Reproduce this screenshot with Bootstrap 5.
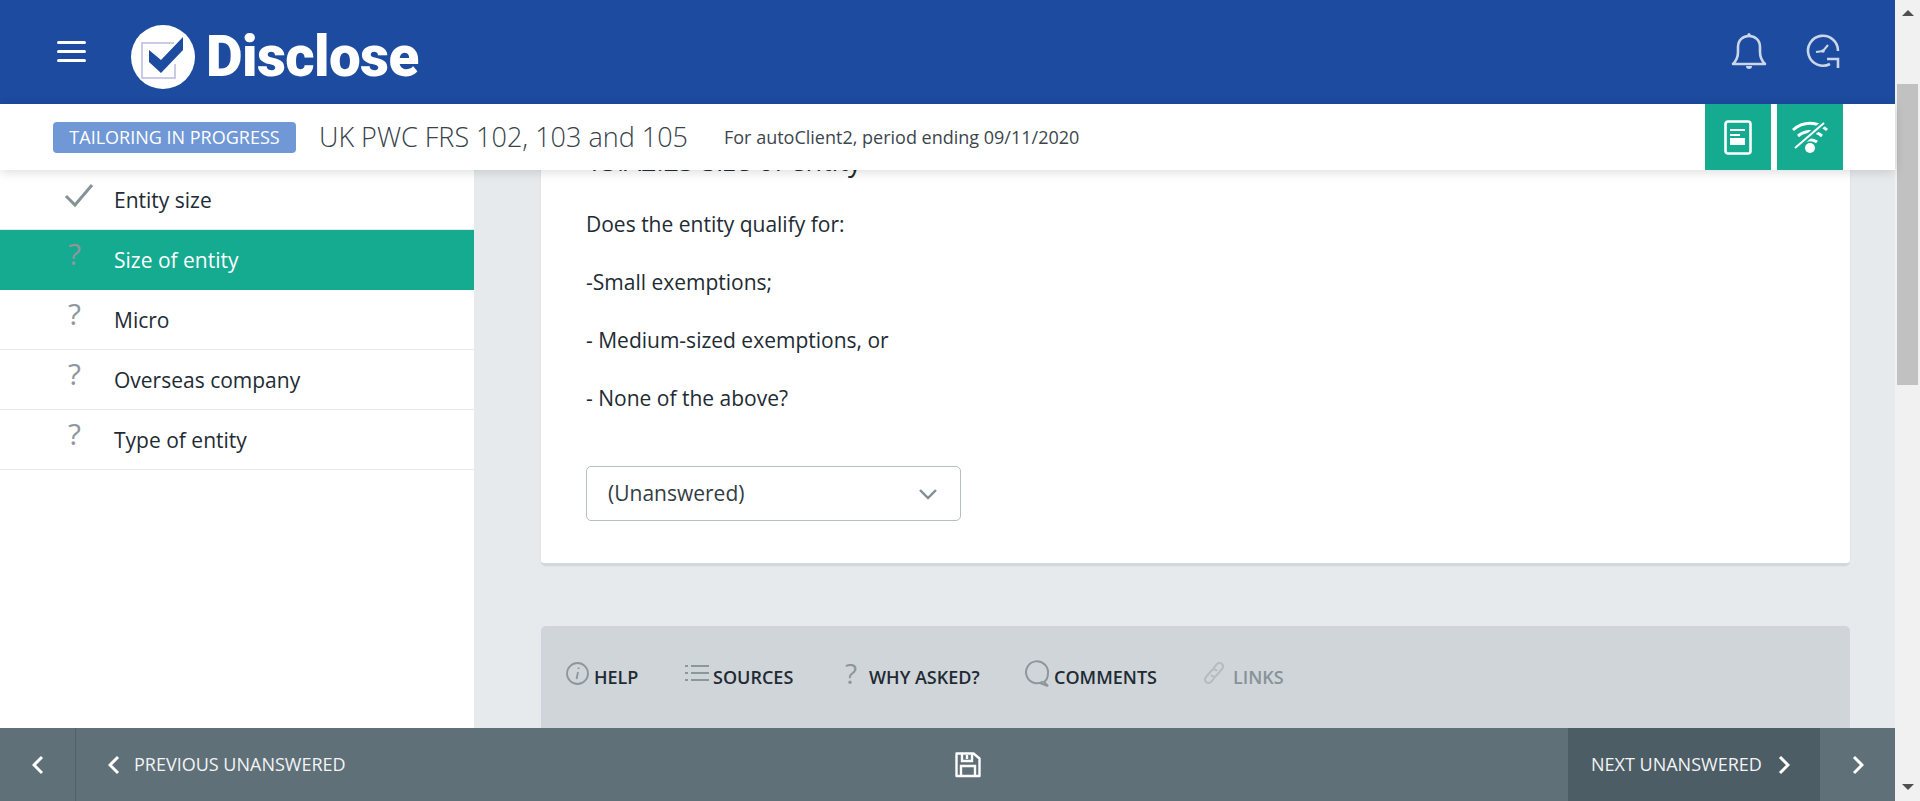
<!DOCTYPE html>
<html lang="en"><head><meta charset="utf-8"><title>Disclose</title>
<link href="https://cdn.jsdelivr.net/npm/bootstrap@5.3.0/dist/css/bootstrap.min.css" rel="stylesheet">
<style>
html,body{height:100%;overflow:hidden}
body{font-family:"Open Sans",sans-serif;color:#222b33;background:#fff}
.shell{height:801px}
.app-col{min-width:0}
.top-bar{height:104px;background:#1c4b9f;padding-left:57px;padding-right:54px;flex:none}
.burger{width:29px;height:21px;margin-right:44px;margin-top:-2px;display:flex;flex-direction:column;justify-content:space-between}
.burger i{display:block;height:3px;border-radius:2px;background:#fff}
.logo-mark{margin-top:10px}
.logo-word{font-family:Roboto,sans-serif;font-weight:900;font-size:56.5px;line-height:1;color:#fff;letter-spacing:-.6px;margin-left:10px;margin-top:11px}
.bell-ic{margin-top:-2px}
.clock-ic{margin-left:14px;margin-top:-2px}
.sub-bar{height:66px;flex:none;background:#fff;padding-left:53px;padding-right:52px;position:relative;z-index:3;box-shadow:0 2px 10px rgba(0,0,0,.14)}
.state-tag{background:#7098d6;color:#fff;border-radius:4px;font-size:18px;height:31px;width:243px;line-height:31px;text-align:center;margin-right:23px;white-space:nowrap}
.doc-title{font-weight:300;font-size:27px;color:#37424a;margin-right:36px;white-space:nowrap}
.doc-for{font-size:18px;color:#3c464d;white-space:nowrap}
.teal-btn{width:66px;height:66px;background:#14ab91;margin-left:6px;display:flex;align-items:center;justify-content:center}
.middle{flex:1 1 0;min-height:0;overflow:hidden;background:#e6eaed}
.side-nav{width:474px;flex:none;background:#fff}
.side-row{height:60px;border-bottom:1px solid #e6e9eb;display:flex;align-items:center;padding-left:64px;font-size:21px;color:#222b33}
.side-label{margin-top:2px}
.side-row.on{background:#14ab91;color:#fff;border-bottom-color:#14ab91}
.side-ic{width:50px;flex:none;height:40px;display:flex;margin-top:-8px;font-weight:400;font-size:30px;line-height:36px;color:#8d979c;padding-left:4px}
.side-ic.tick{padding-left:0;margin-left:0;width:50px;margin-top:-10px}
.main-col{padding:0 45px 0 67px;min-width:0}
.q-card{height:428px;margin-top:-32px;background:#fff;border:0;border-bottom:3px solid #d2d7db;border-radius:5px;padding:5px 45px 0;box-shadow:0 0 2px rgba(0,0,0,.08)}
.q-head{font-size:27px;line-height:36px;margin:0 0 31px;font-weight:400}
.q-card p{font-size:21px;line-height:28px;margin:0 0 30px}
.q-pick{width:375px;height:55px;margin-top:54px;font-size:21px;color:#333d44;padding-left:21px;border-color:#b5bfc5;border-radius:5px;background-size:20px 12px;background-position:right 22px center;background-image:url("data:image/svg+xml,%3Csvg xmlns='http://www.w3.org/2000/svg' viewBox='0 0 20 12'%3E%3Cpath d='M2 2l8 8 8-8' fill='none' stroke='%23808e96' stroke-width='2.4'/%3E%3C/svg%3E")}
.help-panel{margin-top:60px;height:200px;background:#d0d5d9;border-radius:5px 5px 0 0;padding:31px 0 0 24px}
.help-tab{font-size:18px;font-weight:600;color:#222b33;white-space:nowrap;height:40px;line-height:40px}
.help-tab svg{flex:none;margin-top:-8px}
.help-q{font-weight:400;font-size:28px;color:#8b979d;margin:-8px 12px 0 1px}
.help-tab.off{color:#87929a}
.foot-bar{height:73px;flex:none;background:#607078;color:#f2f4f5;font-size:18px}
.foot-end{width:76px;flex:none;border-right:1px solid #526069}
.foot-end.right{width:75px;border:0}
.foot-prev{padding-left:32px;width:400px}
.prev-chev{margin-right:14px}
.save-ic{margin-right:108px}
.foot-next{width:252px;flex:none;background:#4d5d65;padding-left:23px}
.sb-col{width:25px;flex:none;background:#f1f1f1}
.sb-up,.sb-down{width:0;height:0;border-left:6px solid transparent;border-right:6px solid transparent}
.sb-up{border-bottom:6px solid #505050;margin-top:10px}
.sb-thumb{width:21px;height:301px;background:#c1c1c1;margin-top:68px}
.sb-down{border-top:6px solid #505050;margin-bottom:11px}
</style></head>
<body>
<div class="shell d-flex">
 <div class="app-col flex-grow-1 d-flex flex-column">
  <header class="top-bar d-flex align-items-center">
   <div class="burger"><i></i><i></i><i></i></div>
   <svg class="logo-mark" width="66" height="66" viewBox="0 0 66 66"><circle cx="33" cy="33" r="32" fill="#fff"/><path d="M44 19H12v35h33V40" fill="none" stroke="#b9bce0" stroke-width="1.5"/><path d="M19 26l12 10 22-23v13L31 49 19 38z" fill="#1c4b9f"/></svg>
   <span class="logo-word">Disclose</span>
   <span class="flex-grow-1"></span>
   <svg width="36" height="40" viewBox="0 0 36 40" class="me-4 bell-ic" fill="none" stroke="#ccd6ea" stroke-width="2.6" stroke-linejoin="round"><path d="M2 33c4-4 5-7 5-12V16C7 9 12 5 18 5s11 4 11 11v5c0 5 1 8 5 12z"/><circle cx="18" cy="3.5" r="1.6" fill="#ccd6ea" stroke="none"/><path d="M15 35a3 3 0 0 0 6 0z" fill="#ccd6ea" stroke="none"/></svg>
   <svg class="clock-ic" width="36" height="36" viewBox="0 0 36 36" fill="none" stroke="#ccd6ea" stroke-width="2.6"><path d="M33 18A15 15 0 1 0 25 31"/><path d="M22 26h11v9" stroke-linejoin="miter"/><path d="M23 12l-5 6-7 1" stroke-width="2"/><circle cx="18" cy="18" r="1.800" fill="#ccd6ea" stroke="none"/></svg>
  </header>
  <div class="sub-bar d-flex align-items-center">
   <span class="state-tag">TAILORING IN PROGRESS</span>
   <span class="doc-title">UK PWC FRS 102, 103 and 105</span>
   <span class="doc-for">For autoClient2, period ending 09/11/2020</span>
   <span class="flex-grow-1"></span>
   <span class="teal-btn"><svg width="28" height="35" viewBox="0 0 28 35"><rect x="1.500" y="1.500" width="25" height="32" rx="2.500" fill="none" stroke="#fff" stroke-width="2.600"/><path d="M6 9h15v2H6zM6 14h10v2H6zM6 18h15v7H6z" fill="#fff"/></svg></span>
   <span class="teal-btn"><svg width="36" height="34" viewBox="0 0 36 34" fill="none" stroke="#fff" stroke-width="3"><path d="M1 10c10-9 24-9 34 0M6 16c7-6 17-6 24 0M11 22c4-3 10-3 14 0"/><path d="M3 28L32 3" stroke="#14ab91" stroke-width="6"/><path d="M3 28L32 3" stroke-width="2"/><circle cx="18" cy="28" r="5" fill="#fff" stroke="none"/></svg></span>
  </div>
  <div class="middle d-flex">
   <nav class="side-nav">
    <div class="side-row"><span class="side-ic tick"><svg width="30" height="26" viewBox="0 0 30 26" class="mt-2" fill="none" stroke="#859296" stroke-width="3"><path d="M2 13l9 9L28 2"/></svg></span><span class="side-label">Entity size</span></div>
    <div class="side-row on"><span class="side-ic">?</span><span class="side-label">Size of entity</span></div>
    <div class="side-row"><span class="side-ic">?</span><span class="side-label">Micro</span></div>
    <div class="side-row"><span class="side-ic">?</span><span class="side-label">Overseas company</span></div>
    <div class="side-row"><span class="side-ic">?</span><span class="side-label">Type of entity</span></div>
   </nav>
   <main class="main-col flex-grow-1">
    <section class="q-card">
     <h2 class="q-head">13.A2.23 Size of entity</h2>
     <p>Does the entity qualify for:</p>
     <p>-Small exemptions;</p>
     <p>- Medium-sized exemptions, or</p>
     <p>- None of the above?</p>
     <select class="form-select q-pick"><option>(Unanswered)</option></select>
    </section>
    <section class="help-panel">
     <div class="d-flex align-items-start">
     <div class="help-tab d-flex align-items-center" style="width:120px"><svg width="25" height="25" viewBox="0 0 25 25" class="me-1" fill="none" stroke="#8b979d" stroke-width="1.800"><circle cx="12.500" cy="12.500" r="10.500"/><path d="M13 11l-1.500 7M13.600 6.500v1.600"/></svg>HELP</div>
     <div class="help-tab d-flex align-items-center" style="width:159px"><svg width="24" height="18" viewBox="0 0 24 18" class="me-1" stroke="#8b979d" stroke-width="2.200"><path d="M6 2h18M6 9h18M6 16h18M0 2h3M0 9h3M0 16h3"/></svg>SOURCES</div>
     <div class="help-tab d-flex align-items-center" style="width:180px"><span class="help-q">?</span>WHY ASKED?</div>
     <div class="help-tab d-flex align-items-center" style="width:179px"><svg width="26" height="28" viewBox="0 0 26 28" class="me-1" fill="none" stroke="#8b979d" stroke-width="2"><path d="M19 22.500A11 11 0 1 1 24 14c0 4-1 7-4 9l4 4-8-3"/></svg>COMMENTS</div>
     <div class="help-tab off d-flex align-items-center"><svg width="22" height="24" viewBox="0 0 22 24" class="me-2" fill="none" stroke="#b4bcc1" stroke-width="2"><path d="M10 8l4-5a3.500 3.500 0 0 1 5 5l-6 7a3.500 3.500 0 0 1-5-1M12 16l-4 5a3.500 3.500 0 0 1-5-5l6-7a3.500 3.500 0 0 1 5 1"/></svg>LINKS</div>
     </div>
    </section>
   </main>
  </div>
  <footer class="foot-bar d-flex align-items-stretch">
   <div class="foot-end d-flex align-items-center justify-content-center"><svg width="12" height="20" viewBox="0 0 12 20" fill="none" stroke="#fff" stroke-width="3"><path d="M10 2L2 10l8 8"/></svg></div>
   <div class="foot-prev d-flex align-items-center"><svg class="prev-chev" width="12" height="20" viewBox="0 0 12 20" fill="none" stroke="#fff" stroke-width="3"><path d="M10 2L2 10l8 8"/></svg>PREVIOUS UNANSWERED</div>
   <div class="flex-grow-1 d-flex align-items-center justify-content-center"><svg class="save-ic" width="28" height="26" viewBox="0 0 28 26" fill="none" stroke="#fff" stroke-width="2.400"><path d="M2.500 1.500h17l6 5v17.500h-23z" stroke-linejoin="round"/><path d="M8 2v7h10V2M7 24v-10h14v10M13 3v4"/></svg></div>
   <div class="foot-next d-flex align-items-center">NEXT UNANSWERED<svg width="12" height="20" viewBox="0 0 12 20" class="ms-3" fill="none" stroke="#fff" stroke-width="3"><path d="M2 2l8 8-8 8"/></svg></div>
   <div class="foot-end right d-flex align-items-center justify-content-center"><svg width="12" height="20" viewBox="0 0 12 20" fill="none" stroke="#fff" stroke-width="3"><path d="M2 2l8 8-8 8"/></svg></div>
  </footer>
 </div>
 <div class="sb-col d-flex flex-column align-items-center">
  <div class="sb-up"></div><div class="sb-thumb"></div><div class="flex-grow-1"></div><div class="sb-down"></div>
 </div>
</div>
</body></html>
